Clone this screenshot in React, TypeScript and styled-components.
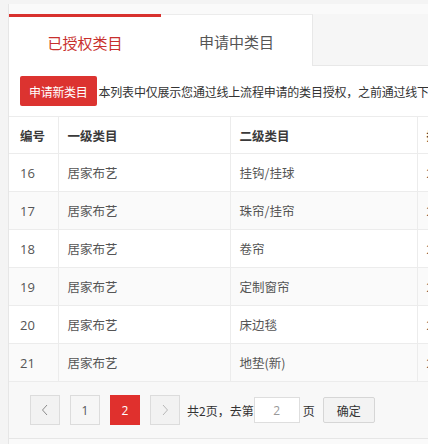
import React from "react";
import styled, { createGlobalStyle, css } from "styled-components";

const Global = createGlobalStyle`
  html, body { margin: 0; padding: 0; background: #f4f4f4; }
  body { font-family: "Noto Sans CJK SC", "Microsoft YaHei", "Noto Sans", sans-serif; overflow: hidden; }
  * { box-sizing: border-box; }
`;

const Page = styled.div`
  width: 428px;
  height: 444px;
  padding: 4px 0 0 8px;
  background: #f4f4f4;
  overflow: hidden;
`;

const Panel = styled.div`
  width: 700px;
  background: #fafafa;
  padding-top: 10px;
  border-left: 1px solid #e6e6e6;
  height: 440px;
`;

const TabBar = styled.div`
  display: flex;
  height: 52px;
  background: #f6f6f6;
  border-bottom: 1px solid #e8e8e8;
`;

const Tab = styled.div<{ $active?: boolean }>`
  width: 152px;
  height: 52px;
  display: flex;
  align-items: center;
  justify-content: center;
  font-size: 15px;
  background: #fff;
  ${(p) =>
    p.$active
      ? css`
          border-top: 3px solid #d8312e;
          color: #c8302d;
          height: 53px;
          margin-bottom: -1px;
          padding-top: 1px;
        `
      : css`
          border-top: 1px solid #ececec;
          border-right: 1px solid #e8e8e8;
          color: #555;
          padding-top: 2px;
        `}
`;

const Content = styled.div`
  background: #fff;
`;

const Toolbar = styled.div`
  display: flex;
  align-items: center;
  height: 50px;
  padding: 0 11px;
  gap: 2px;
  white-space: nowrap;
`;

const PrimaryButton = styled.button`
  height: 30px;
  padding: 0 9px;
  border: none;
  border-radius: 2px;
  background: #dc3330;
  color: #fff;
  font-family: inherit;
  font-size: 12px;
  letter-spacing: -0.3px;
`;

const Note = styled.span`
  font-size: 12px;
  color: #333;
  letter-spacing: -0.2px;
`;

const Table = styled.table`
  border-collapse: collapse;
  table-layout: fixed;
  width: 600px;
  font-size: 12.5px;
`;

const Th = styled.th<{ $w: number; $first?: boolean }>`
  width: ${(p) => p.$w}px;
  height: 37px;
  text-align: left;
  font-weight: bold;
  color: #3a3a3a;
  padding: 0 0 0 ${(p) => (p.$first ? 11 : 9)}px;
  border-top: 1px solid #ececec;
  border-bottom: 1px solid #ececec;
  border-left: ${(p) => (p.$first ? "none" : "1px solid #ececec")};
  white-space: nowrap;
  overflow: hidden;
`;

const Tr = styled.tr<{ $striped?: boolean }>`
  background: ${(p) => (p.$striped ? "#fafafa" : "#fff")};
`;

const Td = styled.td<{ $first?: boolean }>`
  height: 38px;
  color: #555;
  padding: 0 0 0 ${(p) => (p.$first ? 11 : 9)}px;
  border-bottom: 1px solid #ececec;
  border-left: ${(p) => (p.$first ? "none" : "1px solid #ececec")};
  white-space: nowrap;
  overflow: hidden;
`;

const NumCell = styled(Td)`
  font-family: "Open Sans", "Noto Sans", sans-serif;
  font-size: 13px;
`;

const Pager = styled.div`
  display: flex;
  align-items: center;
  height: 57px;
  padding-left: 21px;
  background: #f8f8f8;
  border-bottom: 1px solid #e6e6e6;
  font-size: 12px;
  color: #333;
  white-space: nowrap;
`;

const PageBtn = styled.div<{ $active?: boolean; $muted?: boolean }>`
  width: 30px;
  height: 30px;
  margin-right: 10px;
  display: flex;
  align-items: center;
  justify-content: center;
  font-family: "Open Sans", "Noto Sans", sans-serif;
  font-size: 12px;
  border: 1px solid ${(p) => (p.$active ? "#e0302d" : "#dcdcdc")};
  background: ${(p) => (p.$active ? "#e0302d" : p.$muted ? "#f2f2f2" : "#f6f6f6")};
  color: ${(p) => (p.$active ? "#fff" : "#555")};
`;

const PagerText = styled.span<{ $gap?: number }>`
  margin-left: ${(p) => p.$gap ?? 0}px;
`;

const PageInput = styled.div`
  width: 46px;
  height: 26px;
  margin-left: 0;
  border: 1px solid #dedede;
  background: #fff;
  color: #999;
  display: flex;
  align-items: center;
  justify-content: center;
  font-family: "Open Sans", "Noto Sans", sans-serif;
  font-size: 12px;
`;

const ConfirmBtn = styled.div`
  width: 52px;
  height: 26px;
  margin-left: 8px;
  border: 1px solid #d6d6d6;
  border-radius: 2px;
  background: #f3f3f3;
  display: flex;
  align-items: center;
  justify-content: center;
  color: #333;
`;

const Chevron = ({ dir }: { dir: "l" | "r" }) => (
  <svg width="8" height="12" viewBox="0 0 8 12">
    <polyline
      points={dir === "l" ? "6,1 1.5,6 6,11" : "2,1 6.5,6 2,11"}
      fill="none"
      stroke={dir === "l" ? "#8a8a8a" : "#b8b8b8"}
      strokeWidth="1"
    />
  </svg>
);

const rows = [
  { id: 16, a: "居家布艺", b: "挂钩/挂球", c: "2018-03-12" },
  { id: 17, a: "居家布艺", b: "珠帘/挂帘", c: "2018-03-12" },
  { id: 18, a: "居家布艺", b: "卷帘", c: "2018-03-12" },
  { id: 19, a: "居家布艺", b: "定制窗帘", c: "2018-03-12" },
  { id: 20, a: "居家布艺", b: "床边毯", c: "2018-03-12" },
  { id: 21, a: "居家布艺", b: "地垫(新)", c: "2018-03-12" },
];

export default function App() {
  return (
    <>
      <Global />
      <Page>
        <Panel>
          <TabBar>
            <Tab $active>已授权类目</Tab>
            <Tab>申请中类目</Tab>
          </TabBar>
          <Content>
            <Toolbar>
              <PrimaryButton>申请新类目</PrimaryButton>
              <Note>本列表中仅展示您通过线上流程申请的类目授权，之前通过线下的类目授权请联系运营</Note>
            </Toolbar>
            <Table>
              <thead>
                <tr>
                  <Th $w={49} $first>编号</Th>
                  <Th $w={172}>一级类目</Th>
                  <Th $w={187}>二级类目</Th>
                  <Th $w={192}>授权时间</Th>
                </tr>
              </thead>
              <tbody>
                {rows.map((r, i) => (
                  <Tr key={r.id} $striped={i % 2 === 1}>
                    <NumCell $first>{r.id}</NumCell>
                    <Td>{r.a}</Td>
                    <Td>{r.b}</Td>
                    <Td>{r.c}</Td>
                  </Tr>
                ))}
              </tbody>
            </Table>
          </Content>
          <Pager>
            <PageBtn $muted>
              <Chevron dir="l" />
            </PageBtn>
            <PageBtn>1</PageBtn>
            <PageBtn $active>2</PageBtn>
            <PageBtn $muted>
              <Chevron dir="r" />
            </PageBtn>
            <PagerText $gap={-3}>共2页，去第</PagerText>
            <PageInput>2</PageInput>
            <PagerText $gap={3}>页</PagerText>
            <ConfirmBtn>确定</ConfirmBtn>
          </Pager>
        </Panel>
      </Page>
    </>
  );
}
